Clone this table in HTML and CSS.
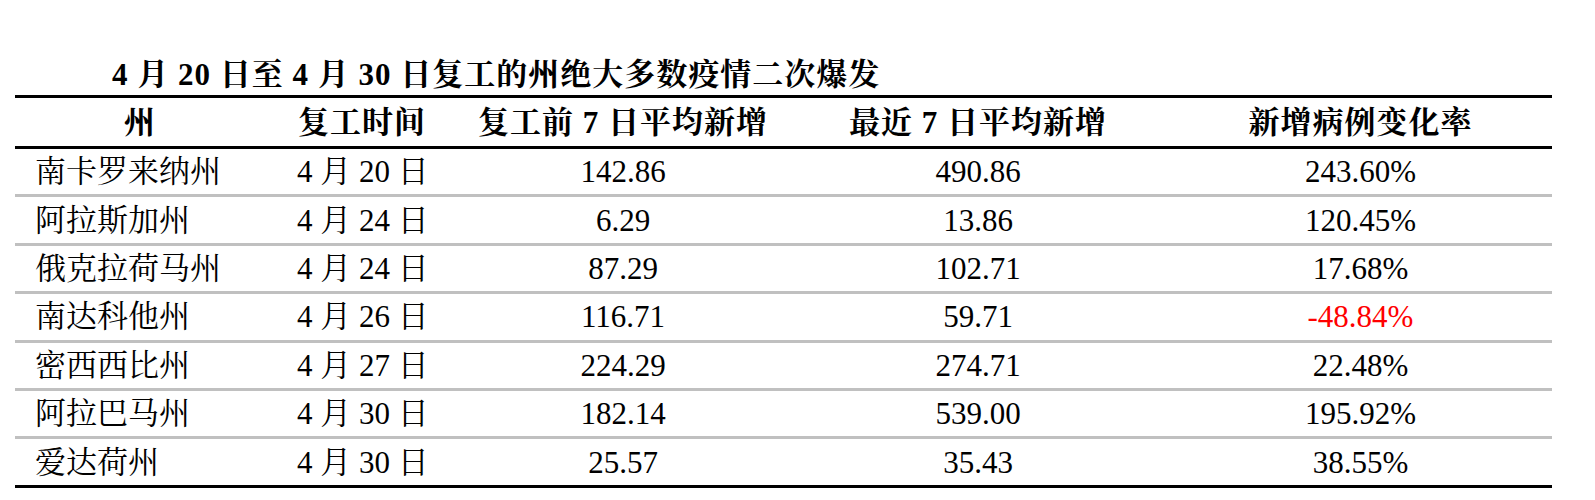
FILE: index.html
```html
<!DOCTYPE html>
<html lang="zh-CN">
<head>
<meta charset="utf-8">
<title>复工州疫情</title>
<link rel="stylesheet" href="styles.css">
</head>
<body>
<div class="page">
  <h1 class="title">4 月 20 日至 4 月 30 日复工的州绝大多数疫情二次爆发</h1>
  <table class="data">
    <colgroup>
      <col class="c1"><col class="c2"><col class="c3"><col class="c4"><col class="c5">
    </colgroup>
    <thead>
      <tr>
        <th>州</th>
        <th>复工时间</th>
        <th>复工前 7 日平均新增</th>
        <th>最近 7 日平均新增</th>
        <th>新增病例变化率</th>
      </tr>
    </thead>
    <tbody>
      <tr><td class="name">南卡罗来纳州</td><td class="date">4 月 20 日</td><td>142.86</td><td>490.86</td><td>243.60%</td></tr>
      <tr><td class="name">阿拉斯加州</td><td class="date">4 月 24 日</td><td>6.29</td><td>13.86</td><td>120.45%</td></tr>
      <tr><td class="name">俄克拉荷马州</td><td class="date">4 月 24 日</td><td>87.29</td><td>102.71</td><td>17.68%</td></tr>
      <tr><td class="name">南达科他州</td><td class="date">4 月 26 日</td><td>116.71</td><td>59.71</td><td class="neg">-48.84%</td></tr>
      <tr><td class="name">密西西比州</td><td class="date">4 月 27 日</td><td>224.29</td><td>274.71</td><td>22.48%</td></tr>
      <tr><td class="name">阿拉巴马州</td><td class="date">4 月 30 日</td><td>182.14</td><td>539.00</td><td>195.92%</td></tr>
      <tr><td class="name">爱达荷州</td><td class="date">4 月 30 日</td><td>25.57</td><td>35.43</td><td>38.55%</td></tr>
    </tbody>
  </table>
</div>
</body>
</html>
```
FILE: styles.css
```css
html, body {
  margin: 0;
  padding: 0;
  background: #ffffff;
}

.page {
  padding: 55px 0 0 15px;
  width: 1537px;
  font-family: "Liberation Serif", "Noto Serif CJK SC", "Noto Sans CJK SC", serif;
  color: #000000;
}

.title {
  margin: 0;
  padding-left: 97px;
  height: 40px;
  line-height: 40px;
  font-size: 31px;
  font-weight: bold;
  letter-spacing: 1px;
  white-space: nowrap;
}

.data {
  width: 1537px;
  border-collapse: collapse;
  table-layout: fixed;
  font-size: 31px;
}

.c1 { width: 250px; }
.c2 { width: 194px; }
.c3 { width: 328px; }
.c4 { width: 382px; }
.c5 { width: 383px; }

.data thead tr {
  border-top: 3px solid #000000;
  border-bottom: 3px solid #000000;
}

.data th {
  height: 48px;
  padding: 0;
  font-weight: bold;
  text-align: center;
  vertical-align: middle;
  line-height: 1;
  letter-spacing: 1px;
  white-space: nowrap;
}

.data tbody tr {
  border-bottom: 3px solid #c0c0c0;
}

.data tbody tr:last-child {
  border-bottom: 3px solid #000000;
}

.data td {
  height: 45.4px;
  padding: 0;
  text-align: center;
  vertical-align: middle;
  line-height: 1;
  white-space: nowrap;
}

.data td.name {
  text-align: left;
  padding-left: 20px;
}

.data td.date {
  text-align: left;
  padding-left: 32px;
}

.data td.neg {
  color: #ff0000;
}
```
